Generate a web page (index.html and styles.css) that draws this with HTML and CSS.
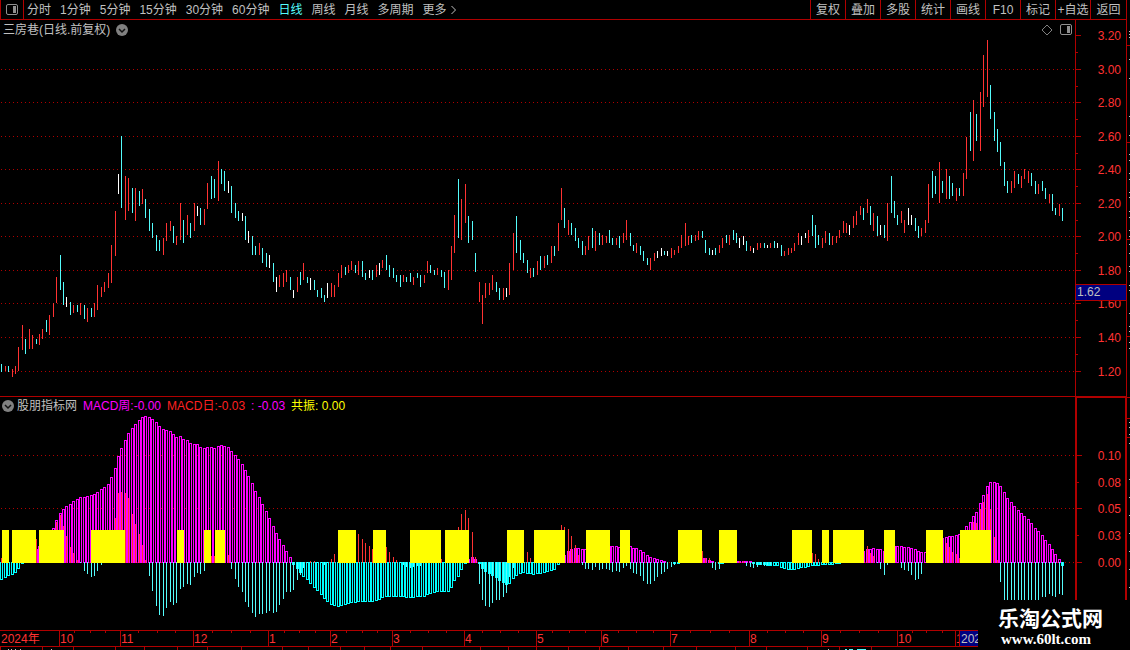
FILE: index.html
```
<!DOCTYPE html>
<html lang="zh-CN">
  <head>
    <meta charset="utf-8" />
    <title>三房巷 日线</title>
    <link rel="stylesheet" href="styles.css">
  </head>
  <body>
    <div class="app">
      <header class="toolbar">
        <button class="layout-btn" aria-label="布局">
          <svg width="12" height="12" viewBox="0 0 12 12">
            <rect x="0.5" y="0.5" width="11" height="10" rx="1.5" fill="none" stroke="#909090" />
            <rect x="7" y="2" width="3" height="7" fill="#909090" />
          </svg>
        </button>
        <nav class="periods">
          <button>分时</button>
          <button>1分钟</button>
          <button>5分钟</button>
          <button>15分钟</button>
          <button>30分钟</button>
          <button>60分钟</button>
          <button class="active">日线</button>
          <button>周线</button>
          <button>月线</button>
          <button>多周期</button>
          <button class="more">更多
            <svg width="6" height="10" viewBox="0 0 6 10">
              <path d="M0.5 1L4.5 5L0.5 9" fill="none" stroke="#c0c0c0" />
            </svg>
          </button>
        </nav>
        <div class="tools">
          <button>复权</button>
          <button>叠加</button>
          <button>多股</button>
          <button>统计</button>
          <button>画线</button>
          <button>F10</button>
          <button>标记</button>
          <button>+自选</button>
          <button>返回</button>
        </div>
      </header>

      <main class="workspace">
        <section class="panel price-panel">
          <div class="panel-head">
            <span>三房巷(日线.前复权)</span>
            <button class="round-btn" aria-label="展开">
              <svg width="12" height="12" viewBox="0 0 12 12">
                <circle cx="6" cy="6" r="6" fill="#808080" />
                <path d="M3 5L6 8L9 5" fill="none" stroke="#111" stroke-width="1.5" />
              </svg>
            </button>
            <div class="head-icons">
              <svg width="12" height="12" viewBox="0 0 12 12">
                <path d="M6 1L11 6L6 11L1 6Z" fill="none" stroke="#808080" />
              </svg>
              <svg width="12" height="12" viewBox="0 0 12 12">
                <rect x="0.5" y="0.5" width="11" height="10" rx="1.5" fill="none" stroke="#909090" />
                <rect x="7" y="2" width="3" height="7" fill="#909090" />
              </svg>
            </div>
          </div>
          <svg id="priceChart" class="chart price-chart"></svg>
        </section>
        <aside class="axis price-axis">
          <svg id="priceAxis" class="chart"></svg>
          <div class="price-tag">1.62</div>
        </aside>

        <section class="panel macd-panel">
          <div class="panel-head macd-head">
            <button class="round-btn" aria-label="展开">
              <svg width="12" height="12" viewBox="0 0 12 12">
                <circle cx="6" cy="6" r="6" fill="#808080" />
                <path d="M3 5L6 8L9 5" fill="none" stroke="#111" stroke-width="1.5" />
              </svg>
            </button>
            <span>股朋指标网</span>
            <span class="magenta">MACD周:-0.00</span>
            <span class="red">MACD日:-0.03</span>
            <span class="magenta">: -0.03</span>
            <span class="yellow">共振: 0.00</span>
          </div>
          <svg id="macdChart" class="chart macd-chart"></svg>
        </section>
        <aside class="axis macd-axis">
          <svg id="macdAxis" class="chart"></svg>
        </aside>

        <svg id="edge" class="chart edge"></svg>
      </main>

      <footer class="timeline">
        <svg id="timeAxis" class="chart"></svg>
      </footer>
      <svg id="nextStrip" class="chart next-strip"></svg>

      <div class="brand">
        <strong>乐淘公式网</strong>
        <span>www.60lt.com</span>
      </div>
    </div>
    <script src="chart.js"></script>
  </body>
</html>
```
FILE: styles.css
```
* {
  box-sizing: border-box;
}
body {
  margin: 0;
  background: #000;
  color: #c0c0c0;
  font-family: "Liberation Sans", "Noto Sans CJK SC", sans-serif;
  font-size: 12px;
  line-height: 18px;
}
button {
  margin: 0;
  padding: 0;
  border: 0;
  background: none;
  color: inherit;
  font: inherit;
  white-space: nowrap;
  cursor: pointer;
}
svg {
  display: block;
}
.app {
  position: relative;
  min-height: 100vh;
  overflow: hidden;
}

/* toolbar */
.toolbar {
  display: flex;
  height: 20px;
  margin-right: 3px;
  border: 1px solid #b00000;
  border-top: 0;
}
.layout-btn {
  display: flex;
  align-items: center;
  justify-content: center;
  width: 23px;
  border-right: 1px solid #b00000;
}
.periods {
  display: flex;
  flex: 1;
  gap: 9px;
  padding-left: 3px;
}
.periods .active {
  color: #54fcfc;
}
.more {
  display: flex;
  align-items: center;
  gap: 4px;
}
.tools {
  display: flex;
}
.tools button {
  width: 35px;
  border-left: 1px solid #b00000;
}
.tools button:last-child {
  width: 36px;
}

/* panels */
.workspace {
  display: grid;
  grid-template-columns: minmax(0, 1fr) 52px 3px;
}
.panel {
  grid-column: 1;
}
.price-panel {
  border-bottom: 1px solid #b00000;
}
.panel-head {
  display: flex;
  align-items: center;
  gap: 6px;
  height: 20px;
  padding: 0 3px;
}
.macd-head {
  height: 18px;
  padding: 0 2px;
  line-height: 16px;
}
.macd-head .round-btn {
  margin-right: -3px;
}
.head-icons {
  display: flex;
  gap: 7px;
  margin-left: auto;
}
.chart {
  width: 100%;
  height: 100%;
  overflow: hidden;
  shape-rendering: crispEdges;
}
.price-chart {
  height: 356px;
}
.macd-chart {
  height: 215px;
}
.magenta {
  color: #ff00ff;
}
.red {
  color: #ff2020;
}
.yellow {
  color: #ffff00;
}

/* axes */
.axis {
  grid-column: 2;
  position: relative;
  border: 1px solid #b00000;
  border-width: 0 1px;
}
.axis .chart {
  position: absolute;
}
.macd-axis {
  border-width: 1px 2px 0;
}
.price-axis {
  border-bottom-width: 1px;
}
.chart text {
  fill: #ff3232;
}
.price-tag {
  position: absolute;
  top: 264px;
  left: 0;
  right: 0;
  height: 17px;
  padding-left: 1px;
  border: 1px solid #b00000;
  border-width: 1px 0;
  background: #000080;
  line-height: 15px;
}
.edge {
  grid-column: 3;
  grid-row: 1 / 3;
  height: 610px;
}
.timeline {
  height: 17px;
  border: 1px solid #b00000;
  border-left: 0;
}
.chart .tag-text {
  fill: #c0c0c0;
}
.next-strip {
  height: 3px;
}
.brand {
  position: absolute;
  right: 0;
  bottom: 0;
  width: 152px;
  height: 50px;
  padding: 7px 0 0 20px;
  background: #000;
  color: #fff;
}
.brand strong {
  display: block;
  font-size: 21px;
  line-height: 24px;
}
.brand span {
  display: block;
  padding-left: 3px;
  font: bold 15px/16px "Liberation Serif", serif;
}
```
FILE: chart.js
```
const RED = "#ff3232", CYAN = "#54fcfc", WHITE = "#ffffff", LINE = "#b00000";
const NS = "http://www.w3.org/2000/svg";

// one entry per day: colour, high and low as window rows
const price = `
c364-372 r366-371 c366-372 r369-377 r366-374 r347-371 r325-350 c339-354 r329-349 r335-349
c339-344 r334-345 r329-339 c320-332 r315-335 r303-317 r277-303 c255-290 c282-305 w297-307
c302-315 r305-313 c305-312 r303-315 c305-319 r308-322 c308-317 r303-317 r285-310 r287-297
r282-292 r273-288 r245-283 r211-256 w174-194 c136-208 r176-220 r178-211 c188-213 r188-221
c191-206 r189-204 c199-218 c209-231 c223-238 c235-251 c240-251 r238-255 r223-241 r221-231
c226-243 r236-245 r203-240 c220-243 r215-235 c223-238 r203-231 w206-216 c208-225 r209-225
r183-209 c176-199 c179-198 r161-201 c169-184 c171-191 w181-193 c186-213 c203-218 c211-221
w213-221 c216-240 w231-243 c236-255 c246-255 r243-255 c248-263 c253-267 w255-268 c263-282
w277-292 r275-287 r273-287 r270-282 c277-290 w290-298 r277-292 c272-285 r263-280 c277-283
w278-290 c280-290 c290-297 c288-298 c295-302 w283-298 r283-297 r285-297 r273-287 r265-278
c267-275 r265-273 r261-270 c265-273 r261-275 c261-277 c273-280 w270-278 c270-280 r265-277
w263-275 r260-268 c255-270 c265-277 c268-278 c275-282 c275-287 r275-282 c277-282 c273-282
r277-285 c273-278 c275-287 r275-283 r261-273 c265-273 c270-275 r268-275 c270-277 c272-288
r270-290 r246-280 r215-253 c179-238 r199-240 r184-223 c216-243 c221-240 c253-272 r282-302
r295-324 r283-298 r283-295 r275-290 c282-292 c288-300 r288-300 w288-297 r263-295 r233-270
c216-253 c240-260 c253-263 c260-273 r268-278 c268-277 r261-275 c256-270 r256-268 c255-265
r246-263 c246-256 r223-251 r188-220 c208-228 r220-235 c223-235 c228-241 c238-248 c241-255
r246-255 r236-250 c228-248 r231-251 c233-245 r235-245 r236-243 c230-243 c238-245 r238-245
c236-248 r233-243 r220-240 c233-246 c245-251 r243-253 c246-255 c251-261 c258-265 r258-270
r253-261 w251-258 w248-256 c251-255 w251-256 r248-258 r250-255 r246-253 r235-248 r223-246
r236-245 c235-243 r235-241 r231-240 c231-238 c240-253 c248-255 w250-255 c248-255 r245-253
r238-248 c235-243 r235-245 c230-240 c233-243 w238-248 w236-245 c241-251 r246-251 w248-253
r243-250 r243-248 c243-248 w245-248 r243-248 c241-248 w243-248 c245-256 r251-256 r248-255
r248-253 r243-251 r233-245 w236-245 w233-238 r230-243 c215-236 c225-248 c235-245 r238-248
r231-243 c233-245 r236-245 r236-243 r230-238 r221-233 r223-233 w225-235 r216-228 r211-225
r206-215 c208-220 r199-213 c206-225 r213-231 c216-236 w225-235 c225-238 r203-241 c176-213
c201-218 c215-225 r211-223 r220-233 w208-225 w215-225 c218-231 c226-238 r228-236 r220-233
r184-223 c171-198 c176-194 r162-203 c181-193 r169-199 c176-199 c183-196 r188-201 c188-196
r173-196 r137-179 c112-151 r100-161 c114-141 r92-151 r55-107 r40-97 c85-119 c112-141
c129-152 c142-166 c162-186 c181-193 r181-193 r171-188 c174-184 r176-188 r169-179 r171-183
c173-186 c181-194 r184-194 c181-191 c188-199 r194-203 c194-211 c208-215 r204-216 c208-221`;

// weekly MACD histogram
const weekly = [
  -17, -15, -13, -12, -10, -6, -1, 2, 6, 9, 13, 16, 22, 27, 31, 34, 42, 49, 53, 56,
  58, 61, 63, 65, 65, 66, 67, 68, 70, 73, 75, 78, 85, 94, 106, 114, 122, 129, 134, 138,
  142, 145, 146, 145, 143, 140, 136, 133, 132, 131, 128, 125, 126, 123, 122, 119, 118, 118, 115, 114,
  115, 115, 114, 116, 117, 116, 115, 111, 107, 103, 98, 92, 86, 79, 71, 65, 58, 51, 44, 36,
  29, 23, 17, 11, 5, -2, -6, -10, -14, -17, -21, -25, -28, -32, -36, -39, -42, -43, -44, -43,
  -42, -41, -40, -40, -39, -39, -39, -39, -39, -38, -37, -35, -34, -34, -34, -34, -34, -34, -35, -35,
  -35, -34, -34, -34, -32, -31, -30, -29, -29, -29, -29, -25, -18, -14, -7, -1, 3, 5, 3, -1,
  -6, -9, -11, -13, -15, -18, -20, -22, -21, -16, -13, -11, -10, -11, -11, -12, -11, -11, -10, -9,
  -8, -7, -2, 1, 7, 11, 13, 14, 14, 13, 13, 14, 14, 15, 15, 16, 16, 16, 16, 16,
  15, 15, 15, 16, 14, 14, 12, 10, 7, 5, 4, 3, 2, 1, 0, 0, -1, -1, 1, 2,
  3, 4, 4, 4, 4, 4, 2, 1, 0, -1, -1, 0, 0, 1, 1, 1, 1, 1, 1, -1,
  -2, -2, -2, -3, -3, -3, -3, -5, -6, -7, -7, -7, -6, -5, -5, -4, -3, -3, -3, -2,
  -2, -2, -2, -1, -1, 1, 3, 5, 7, 8, 9, 11, 13, 13, 14, 13, 13, 11, 12, 14,
  16, 16, 16, 15, 15, 14, 13, 11, 10, 10, 12, 15, 18, 21, 24, 25, 26, 26, 27, 28,
  32, 36, 40, 46, 50, 59, 67, 76, 80, 80, 79, 76, 70, 64, 60, 56, 52, 49, 46, 43,
  39, 34, 31, 27, 22, 18, 13, 8, 3, -3,
];

// daily MACD, runs of values keyed by the first day
const daily = {
  0: [4],
  10: [23],
  16: [40, 47, 36, 26, 15, 9, 2, 0, -8, -11, -14, -13, -8, -2],
  33: [44, 69, 70, 69, 64, 48, 38, 28, 17, 2, -13, -28, -43, -52, -53, -45, -39, -42, -40,
    -26, -24, -21, -22, -14, -10, -11, -8, 0, 6, 6, 6, 6, 6, 7, -6, -16, -24, -29, -39, -44,
    -50, -54, -51, -51, -50, -48, -50, -49, -42, -36, -29, -29, -27, -17, -12, -5, 0, 1, 1,
    0, 0, -2, 0, 3, 8],
  104: [28, 23, 19, 16, 13],
  112: [15, 10, 5, 2, 0, -2, -4, -5, -4, -3, -3],
  128: [3],
  133: [35, 48, 52, 44, 30, 5, -21, -37, -43, -44, -40, -37, -37, -34, -30, -14, -5],
  153: [10, 4],
  163: [37, 35, 33, 26, 17, 7, -2, -6, -6, -7, -4, -7, -6, -6, -7, -9, -8, -9, -5, -3, -6,
    -10, -11, -13, -18, -21, -21, -18, -14, -11, -9, -6, -4, -2],
  204: [11, 4, 4, -5, -7, -6],
  213: [1, 1, 1, 1, -3, -4, -5, -4, -2, -3, -2, -2],
  236: [9, 8, 3],
  252: [16, 9, 6, 0, -6, -12, -2],
  262: [-5, -7, -8, -12, -17, -16, -11],
  274: [23, 19, 15, 10, 8, 4],
  283: [40, 39, 53, 60, 68, 53, 25, 2, -19, -38, -38, -38, -38, -38, -38, -38, -38, -38, -38,
    -37, -34, -34, -31, -33, -34, -31, -32],
};

// resonance blocks, start and end column
const blocks = [
  [2, 9], [12, 36], [39, 64], [91, 125], [177, 184], [204, 211], [215, 225], [338, 356],
  [373, 386], [410, 441], [445, 469], [507, 524], [534, 565], [586, 610], [620, 630],
  [678, 702], [719, 737], [792, 812], [822, 829], [833, 864], [884, 895], [926, 943], [960, 991],
];

function add(parent, name, attrs, text) {
  const el = document.createElementNS(NS, name);
  for (const key in attrs) el.setAttribute(key, attrs[key]);
  if (text) el.textContent = text;
  parent.appendChild(el);
  return el;
}
function rect(svg, x, y, width, height, fill) {
  add(svg, "rect", { x, y, width, height, fill });
}
function grid(svg, y) {
  add(svg, "line", {
    x1: 1, x2: "100%", y1: y + 0.5, y2: y + 0.5, stroke: LINE, "stroke-dasharray": "1 3",
  });
}
const dayX = (i) => Math.round(1.25 + i * 3.4337);
const byId = (id) => document.getElementById(id);

// price
const priceTop = 40;
const priceRows = [69, 102, 136, 169, 203, 236, 270, 303, 337, 371];
const priceChart = byId("priceChart");
priceRows.forEach((y) => grid(priceChart, y - priceTop));
price.trim().split(/\s+/).forEach((day, i) => {
  const [high, low] = day.slice(1).split("-").map(Number);
  const color = { r: RED, c: CYAN, w: WHITE }[day[0]];
  rect(priceChart, dayX(i), high - priceTop, 1, low - high, color);
});

const priceAxis = byId("priceAxis");
[35, ...priceRows].forEach((y, i) => {
  rect(priceAxis, 0, y - 20, 5, 1, LINE);
  if (i < 10) rect(priceAxis, 0, y - 3, 2, 1, LINE);
  add(priceAxis, "text", { x: 45, y: y - 15, "text-anchor": "end" }, (3.2 - i * 0.2).toFixed(2));
});

// macd
const zero = 147;
const macdChart = byId("macdChart");
[40, 93, 147].forEach((y) => grid(macdChart, y));
weekly.forEach((v, i) => {
  const x = dayX(i);
  const stroke = v > 0 ? "#ff00ff" : "#00ffff";
  add(macdChart, "rect", {
    x: x - 0.5, y: (v > 0 ? zero - v : zero) + 0.5, width: 2, height: Math.abs(v), fill: "none", stroke,
  });
});
for (const start in daily) {
  daily[start].forEach((v, i) => {
    const x = dayX(Number(start) + i);
    if (v > 0) rect(macdChart, x, zero - v, 1, v + 1, RED);
    else rect(macdChart, x, zero, 1, 1 - v, CYAN);
  });
}
blocks.forEach(([from, to]) => rect(macdChart, from, 115, to - from, 33, "#ffff00"));

const macdAxis = byId("macdAxis");
[["0.10", 455, 5], ["0.08", 482, 2], ["0.05", 508, 5], ["0.03", 535, 2], ["0.00", 562, 5]].forEach(
  ([label, y, size]) => {
    rect(macdAxis, 0, y - 398, size, 1, LINE);
    add(macdAxis, "text", { x: 44, y: y - 393, "text-anchor": "end" }, label);
  }
);

// months
const timeAxis = byId("timeAxis");
add(timeAxis, "text", { x: 1, y: 12 }, "2024年");
[["10", 59], ["11", 120], ["12", 193], ["1", 268], ["2", 330], ["3", 392], ["4", 464], ["5", 536],
  ["6", 601], ["7", 670], ["8", 749], ["9", 821], ["10", 897], ["1", 955]].forEach(([label, x]) => {
  rect(timeAxis, x, 0, 1, 15, LINE);
  add(timeAxis, "text", { x: x + 1, y: 12 }, label);
});
[74, 90, 105, 138, 157, 175, 212, 231, 250, 284, 299, 315, 346, 362, 377, 410, 428, 446, 482, 500,
  518, 552, 569, 585, 618, 636, 653, 690, 710, 729, 767, 785, 803, 840, 859, 878, 912, 926, 942,
].forEach((x) => rect(timeAxis, x, 0, 1, 2, LINE));
rect(timeAxis, 959, 0, 70, 15, "#000080");
rect(timeAxis, 959, 0, 1, 15, LINE);
add(timeAxis, "text", { x: 961, y: 12, class: "tag-text" }, "2024/12");

// top of the pane below
const nextStrip = byId("nextStrip");
[0, 42, 73, 115, 144, 177, 207, 241, 282, 308, 340, 364, 390, 422, 480, 508, 536, 568, 599, 628, 663,
  696, 735, 766, 807, 839, 871].forEach((x) => rect(nextStrip, x, 0, 1, 3, LINE));
[8, 11, 15, 20, 51, 828].forEach((x) => rect(nextStrip, x, 2, 1, 1, "#c0c0c0"));
[[845, 2], [849, 4], [857, 9]].forEach(([x, w]) => rect(nextStrip, x, 2, w, 1, CYAN));

// left edge of the pane on the right
const edge = byId("edge");
[45, 142, 239, 336, 397, 418, 437].forEach((y) => rect(edge, 0, y - 20, 3, 1, LINE));
[31, 34, 37, 59, 78, 116, 135, 154, 160, 173, 179, 192, 197, 211, 217, 230, 236, 244, 253, 266, 271,
  285, 290, 313, 326, 331, 342, 348, 422, 427, 434, 443, 479, 497, 515, 533, 551, 569, 587,
].forEach((y) => rect(edge, 2, y - 20, 1, 1, "#c0c0c0"));
```
